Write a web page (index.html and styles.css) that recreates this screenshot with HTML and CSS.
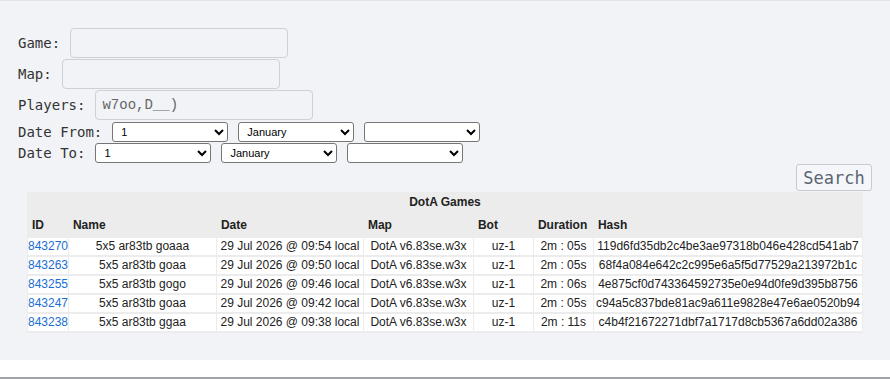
FILE: index.html
```html
<!DOCTYPE html>
<html lang="en">
<head>
    <meta charset="UTF-8">
    <title>DotA Games</title>
    <link rel="stylesheet" href="styles.css">
</head>
<body>
    <div class="page">
        <form class="search">
            <div class="row">
                <label>Game:</label>
                <input type="text" class="field">
            </div>
            <div class="row">
                <label>Map:</label>
                <input type="text" class="field">
            </div>
            <div class="row">
                <label>Players:</label>
                <input type="text" class="field" value="w7oo,D__)">
            </div>
            <div class="row date-row">
                <label>Date From:</label>
                <select class="pick"><option>1</option></select>
                <select class="pick"><option>January</option></select>
                <select class="pick"><option></option></select>
            </div>
            <div class="row date-row">
                <label>Date To:</label>
                <select class="pick"><option>1</option></select>
                <select class="pick"><option>January</option></select>
                <select class="pick"><option></option></select>
            </div>
            <div class="actions">
                <button type="button" class="search-btn">Search</button>
            </div>
        </form>

        <table class="games">
            <colgroup>
                <col style="width: 40px">
                <col style="width: 147px">
                <col style="width: 146px">
                <col style="width: 109px">
                <col style="width: 59px">
                <col style="width: 59px">
                <col style="width: 268px">
            </colgroup>
            <thead>
                <tr><th colspan="7" class="title">DotA Games</th></tr>
                <tr class="heads">
                    <th>ID</th>
                    <th>Name</th>
                    <th>Date</th>
                    <th>Map</th>
                    <th>Bot</th>
                    <th>Duration</th>
                    <th>Hash</th>
                </tr>
            </thead>
            <tbody>
                <tr>
                    <td><a href="#">843270</a></td>
                    <td>5x5 ar83tb goaaa</td>
                    <td>29 Jul 2026 @ 09:54 local</td>
                    <td>DotA v6.83se.w3x</td>
                    <td>uz-1</td>
                    <td>2m : 05s</td>
                    <td>119d6fd35db2c4be3ae97318b046e428cd541ab7</td>
                </tr>
                <tr>
                    <td><a href="#">843263</a></td>
                    <td>5x5 ar83tb goaa</td>
                    <td>29 Jul 2026 @ 09:50 local</td>
                    <td>DotA v6.83se.w3x</td>
                    <td>uz-1</td>
                    <td>2m : 05s</td>
                    <td>68f4a084e642c2c995e6a5f5d77529a213972b1c</td>
                </tr>
                <tr>
                    <td><a href="#">843255</a></td>
                    <td>5x5 ar83tb gogo</td>
                    <td>29 Jul 2026 @ 09:46 local</td>
                    <td>DotA v6.83se.w3x</td>
                    <td>uz-1</td>
                    <td>2m : 06s</td>
                    <td>4e875cf0d743364592735e0e94d0fe9d395b8756</td>
                </tr>
                <tr>
                    <td><a href="#">843247</a></td>
                    <td>5x5 ar83tb goaa</td>
                    <td>29 Jul 2026 @ 09:42 local</td>
                    <td>DotA v6.83se.w3x</td>
                    <td>uz-1</td>
                    <td>2m : 05s</td>
                    <td>c94a5c837bde81ac9a611e9828e47e6ae0520b94</td>
                </tr>
                <tr>
                    <td><a href="#">843238</a></td>
                    <td>5x5 ar83tb ggaa</td>
                    <td>29 Jul 2026 @ 09:38 local</td>
                    <td>DotA v6.83se.w3x</td>
                    <td>uz-1</td>
                    <td>2m : 11s</td>
                    <td>c4b4f21672271dbf7a1717d8cb5367a6dd02a386</td>
                </tr>
            </tbody>
        </table>
    </div>
    <div class="footer"></div>
</body>
</html>
```

FILE: styles.css
```css
/* general */
* {
    box-sizing: border-box;
}

body {
    margin: 0;
    background: #fff;
    font-family: "Liberation Sans", Arial, sans-serif;
    color: #222;
}

.page {
    background: #f2f3f7;
    border-top: 1px solid #e3e4e8;
    padding: 27px 18px 27px 18px;
}

/* search form */
.search {
    font-family: "DejaVu Sans Mono", monospace;
    font-size: 14px;
    color: #333;
}

.row {
    display: flex;
    align-items: center;
    gap: 10px;
    margin-bottom: 1px;
}

.row:nth-child(3) {
    margin-bottom: 2px;
}

.field {
    width: 218px;
    height: 30px;
    border: 1px solid #cfd0d4;
    border-radius: 4px;
    background: #f2f3f7;
    padding: 1px 6px;
    line-height: 26px;
    font-family: "Liberation Mono", "DejaVu Sans Mono", monospace;
    font-size: 14px;
    color: #666;
}

.pick {
    width: 116px;
    height: 20px;
    padding: 0 4px;
    font-family: "Liberation Sans", Arial, sans-serif;
    font-size: 11px;
    color: #000;
    background: #fff;
    border: 1px solid #767676;
    border-radius: 3px;
}

.actions {
    display: flex;
    justify-content: flex-end;
}

.search-btn {
    width: 76px;
    height: 27px;
    padding: 0;
    background: #f5f6f9;
    border: 1px solid #c9cacf;
    border-radius: 3px;
    font-family: "DejaVu Sans Mono", monospace;
    font-size: 17px;
    color: #5b6472;
    cursor: pointer;
}

/* games table */
.games {
    width: 836px;
    margin: 1px auto 0;
    table-layout: fixed;
    border-spacing: 1px 2px;
    background: #ececec;
    font-size: 12px;
}

.games th {
    text-align: left;
    font-weight: bold;
    color: #222;
    padding: 5px 4px 4px;
    line-height: 14px;
}

.games th.title {
    text-align: center;
    padding: 1px;
    line-height: 15px;
}

.games td {
    background: #fff;
    text-align: center;
    padding: 1px 0;
    line-height: 15px;
    white-space: nowrap;
}

.games a {
    color: #1a6dd4;
    text-decoration: none;
}

.footer {
    height: 20px;
    margin-top: 17px;
    border-top: 3px solid #a0a2a8;
}
```
